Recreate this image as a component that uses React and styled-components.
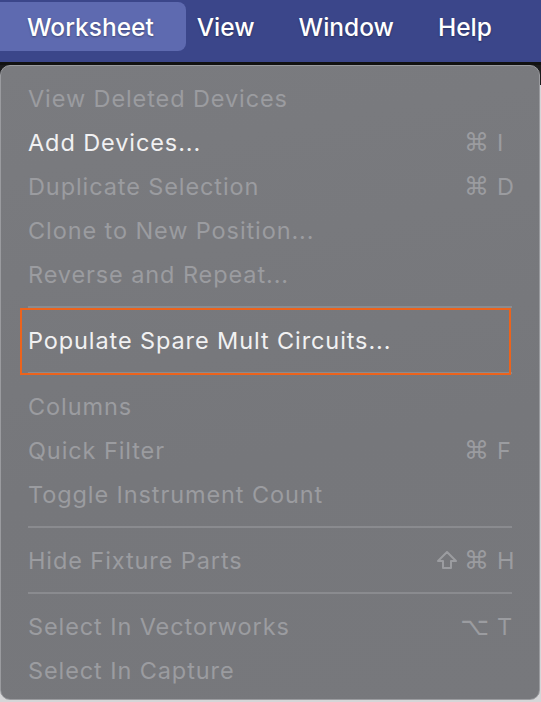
import styled, { createGlobalStyle } from "styled-components";

const GlobalStyle = createGlobalStyle`
  html, body {
    margin: 0;
    padding: 0;
    background: #d6d6d8;
    font-family: Inter, "Noto Sans", "DejaVu Sans", sans-serif;
  }
`;

const menus = ["Worksheet", "View", "Window", "Help"];

// outline shift arrow, drawn because the fonts here have a thin one
const ShiftIcon = () => (
  <svg width="22" height="20" viewBox="0 0 22 20" fill="none">
    <path
      d="M11 2 L20 11 H15 V18 H7 V11 H2 Z"
      stroke="currentColor"
      strokeWidth="2"
      strokeLinejoin="round"
    />
  </svg>
);

const items = [
  { label: "View Deleted Devices", disabled: true },
  { label: "Add Devices...", mods: "⌘", key: "I" },
  { label: "Duplicate Selection", disabled: true, mods: "⌘", key: "D" },
  { label: "Clone to New Position...", disabled: true },
  { label: "Reverse and Repeat...", disabled: true },
  { sep: true },
  { label: "Populate Spare Mult Circuits...", marked: true },
  { sep: true },
  { label: "Columns", disabled: true },
  { label: "Quick Filter", disabled: true, mods: "⌘", key: "F" },
  { label: "Toggle Instrument Count", disabled: true },
  { sep: true },
  { label: "Hide Fixture Parts", disabled: true, shift: true, mods: "⌘", key: "H" },
  { sep: true },
  { label: "Select In Vectorworks", disabled: true, mods: "⌥", key: "T" },
  { label: "Select In Capture", disabled: true },
];

export default function App() {
  return (
    <Page>
      <GlobalStyle />
      <MenuBar>
        {menus.map((m, i) => (
          <MenuTitle key={m} $active={i === 0}>{m}</MenuTitle>
        ))}
      </MenuBar>
      <Dropdown>
        <Panel>
          {items.map((it, i) =>
            it.sep ? (
              <Separator key={i} />
            ) : (
              <Item key={i} $disabled={it.disabled} $marked={it.marked}>
                <span>{it.label}</span>
                {it.key && (
                  <Shortcut>
                    {it.shift && <ShiftIcon />}
                    <Mods>{it.mods}</Mods>
                    <Key>{it.key}</Key>
                  </Shortcut>
                )}
              </Item>
            )
          )}
        </Panel>
      </Dropdown>
    </Page>
  );
}

const Page = styled.div`
  width: 541px;
  height: 702px;
  overflow: hidden;
`;

const MenuBar = styled.div`
  height: 65px;
  background: #3b468a;
  display: flex;
  align-items: flex-start;
  padding-top: 2px;
  box-sizing: border-box;
  border-bottom: 3px solid #111;
`;

const MenuTitle = styled.div`
  height: 49px;
  display: flex;
  align-items: center;
  padding: ${(p) => (p.$active ? "0 32px 0 27px" : "0")};
  margin-right: ${(p) => (p.$active ? "11px" : "44px")};
  border-radius: 0 8px 8px 0;
  background: ${(p) => (p.$active ? "#5e6ab0" : "transparent")};
  color: #fff;
  font-size: 24.5px;
  font-weight: 500;
  text-shadow: 0 1px 2px rgba(0, 0, 0, 0.35);
`;

const Dropdown = styled.div`
  background: linear-gradient(#1c1c1e 0 20px, transparent 20px);
`;

const Panel = styled.div`
  width: 540px;
  box-sizing: border-box;
  background: linear-gradient(170deg, #7a7b7f, #76777b 60%, #77787c);
  border: 1px solid #9a9b9f;
  border-radius: 10px;
  padding: 10px 0 7px;
`;

const Item = styled.div`
  position: relative;
  height: 44px;
  display: flex;
  align-items: center;
  justify-content: space-between;
  padding: 0 24px 0 27px;
  font-size: 23.5px;
  letter-spacing: 0.9px;
  color: ${(p) => (p.$disabled ? "#9b9ca0" : "#f1f1f2")};

  ${(p) =>
    p.$marked &&
    `
    &::after {
      content: "";
      position: absolute;
      top: -10px;
      bottom: -13px;
      left: 19px;
      right: 28px;
      border: 2.5px solid #ec631c;
    }
  `}
`;

const Shortcut = styled.div`
  display: flex;
  align-items: center;
  gap: 6px;
  color: #9b9ca0;
`;

const Mods = styled.span`
  font-family: "DejaVu Sans", sans-serif;
  font-size: 25px;
  letter-spacing: 0;
`;

const Key = styled.span`
  width: 18px;
  margin-left: 2px;
`;

const Separator = styled.div`
  height: 22px;
  display: flex;
  align-items: center;
  padding: 0 27px;
  &::before {
    content: "";
    flex: 1;
    height: 2px;
    background: #8a8b8f;
  }
`;
